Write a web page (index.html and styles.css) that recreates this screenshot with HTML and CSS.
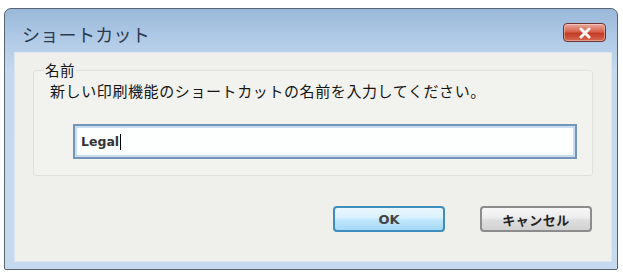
FILE: index.html
```html
<!DOCTYPE html>
<html lang="ja">
<head>
<meta charset="utf-8">
<link rel="stylesheet" href="styles.css">
</head>
<body>
<div class="window">
  <div class="titlebar">
    <div class="title">ショートカット</div>
    <div class="close">
      <svg width="16" height="12" viewBox="0 0 16 12">
        <path d="M4 2 L12 10 M12 2 L4 10" stroke="#fff" stroke-width="3" stroke-linecap="round" opacity="0.95"/>
      </svg>
    </div>
  </div>
  <div class="frame">
    <div class="content">
      <fieldset class="group">
        <legend class="legend">名前</legend>
        <div class="desc">新しい印刷機能のショートカットの名前を入力してください。</div>
        <div class="field"><span class="value">Legal</span><span class="caret"></span></div>
      </fieldset>
      <div class="buttons">
        <div class="btn btn-ok">OK</div>
        <div class="btn btn-cancel">キャンセル</div>
      </div>
    </div>
  </div>
</div>
</body>
</html>
```
FILE: styles.css
```css
html, body {
  margin: 0;
  padding: 0;
  background: #ffffff;
}
body {
  padding: 8px 5px 0 4px;
  font-family: "Noto Sans CJK JP", "Noto Sans", sans-serif;
}
.window {
  width: 614px;
  height: 262px;
  box-sizing: border-box;
  border: 1px solid #5a6470;
  border-radius: 7px 7px 2px 2px;
  background: linear-gradient(to bottom, #9ab8da 0px, #b0cae6 30px, #c4d8ee 60px, #c6daef 100%);
  display: flex;
  flex-direction: column;
  overflow: hidden;
}
.titlebar {
  height: 43px;
  display: flex;
  align-items: flex-start;
  justify-content: space-between;
  padding: 14px 11px 0 17px;
  box-sizing: border-box;
}
.title {
  font-size: 18px;
  line-height: 24px;
  color: #2b3a4e;
  letter-spacing: 0.3px;
  margin-top: -1px;
}
.close {
  width: 43px;
  height: 19px;
  box-sizing: border-box;
  border: 1px solid #6e3434;
  border-radius: 4px;
  background: linear-gradient(to bottom, #e9a99b 0%, #d9624f 45%, #c33a26 55%, #d56a52 100%);
  display: flex;
  align-items: center;
  justify-content: center;
  box-shadow: inset 0 0 0 1px rgba(255,255,255,0.35);
}
.frame {
  flex: 1;
  padding: 0 5px 7px 9px;
  display: flex;
}
.content {
  flex: 1;
  background: #efefeb;
  border: 1px solid #dbe6f2;
  box-sizing: border-box;
  display: flex;
  flex-direction: column;
  padding: 9px 18px 0 18px;
}
.group {
  margin: 0;
  border: 1px solid #e0e0da;
  border-radius: 3px;
  background: #f2f2ee;
  padding: 2px 15px 12px 16px;
  height: 114px;
  box-sizing: border-box;
}
.legend {
  font-size: 14.5px;
  line-height: 16px;
  color: #151515;
  padding: 0 1px;
  margin-left: -6px;
  letter-spacing: 0.5px;
}
.desc {
  font-size: 15px;
  line-height: 20px;
  letter-spacing: 0.6px;
  color: #151515;
  margin-top: 1px;
}
.field {
  margin: 23px 0 0 23px;
  height: 35px;
  box-sizing: border-box;
  border: 2px solid #7396b8;
  box-shadow: inset 0 0 0 2px #c9def3;
  background: #fdfefe;
  display: flex;
  align-items: center;
  padding-left: 6px;
}
.value {
  font-family: "DejaVu Sans", "Liberation Sans", sans-serif;
  font-size: 12.5px;
  font-weight: bold;
  color: #333;
}
.caret {
  width: 1px;
  height: 16px;
  background: #000;
  margin-left: 1px;
}
.buttons {
  display: flex;
  justify-content: flex-end;
  gap: 35px;
  margin-top: 30px;
  padding-right: 1px;
}
.btn {
  width: 112px;
  height: 26px;
  box-sizing: border-box;
  border-radius: 4px;
  display: flex;
  align-items: center;
  justify-content: center;
  font-size: 13px;
  color: #222;
}
.btn-ok {
  border: 2px solid #3f8dbc;
  background: linear-gradient(to bottom, #eaf6fd 0%, #d9f0fc 45%, #bee6fd 55%, #a7d9f5 100%);
  font-family: "DejaVu Sans", "Liberation Sans", sans-serif;
  font-weight: bold;
  color: #444;
}
.btn-cancel {
  border: 2px solid #8c8c8c;
  background: linear-gradient(to bottom, #f7f7f7 0%, #ececec 45%, #dddddd 55%, #d2d2d2 100%);
  font-weight: bold;
  letter-spacing: 0.5px;
}
```
